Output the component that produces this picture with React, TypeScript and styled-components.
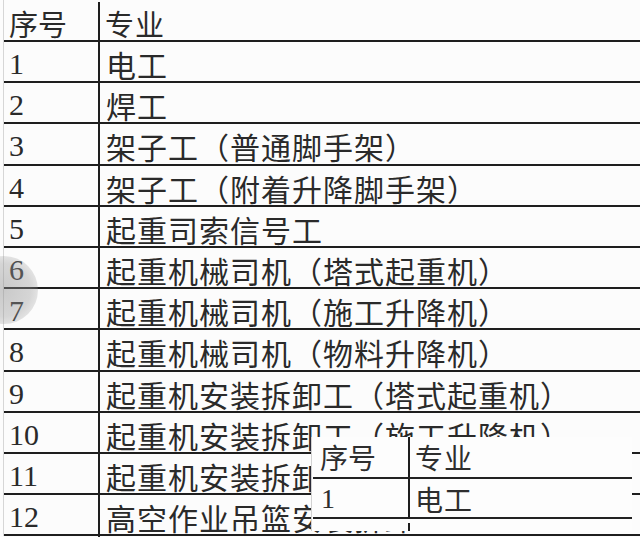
import React from "react";
import styled, { createGlobalStyle } from "styled-components";

const GlobalStyle = createGlobalStyle`
  html, body {
    margin: 0;
    padding: 0;
    background: #fcfcfc;
    overflow: hidden;
  }
`;

const Page = styled.div`
  position: relative;
  width: 640px;
  height: 537px;
  overflow: hidden;
  background: #fcfcfc;
  color: #2a2a2a;
`;

const Sheet = styled.div`
  margin-left: 3px;
  border-left: 1px solid #d6d6d6;
  display: flex;
  flex-direction: column;
`;

const Row = styled.div<{ $h: number; $shift: number }>`
  display: grid;
  grid-template-columns: 96px 1fr;
  flex: none;
  height: ${(p) => p.$h}px;
  padding-top: ${(p) => p.$shift}px;
  border-bottom: 2px solid #1e1e1e;
  box-sizing: content-box;
`;

const NumCell = styled.div<{ $size: number; $pad: number }>`
  display: flex;
  align-items: center;
  padding-left: ${(p) => p.$pad}px;
  border-right: 2px solid #1e1e1e;
  font-family: "Liberation Serif", "Noto Sans CJK SC", serif;
  font-size: ${(p) => p.$size}px;
  white-space: nowrap;
`;

const NameCell = styled.div<{ $size: number; $pad: number }>`
  display: flex;
  align-items: center;
  padding-left: ${(p) => p.$pad}px;
  font-family: "Liberation Serif", "Noto Sans CJK SC", serif;
  font-size: ${(p) => p.$size}px;
  letter-spacing: 1px;
  white-space: nowrap;
`;

const TouchShade = styled.div`
  position: absolute;
  left: -30px;
  top: 256px;
  width: 68px;
  height: 68px;
  border-radius: 50%;
  background: radial-gradient(
    circle,
    rgba(140, 140, 140, 0.45) 0%,
    rgba(150, 150, 150, 0.38) 55%,
    rgba(170, 170, 170, 0) 100%
  );
  pointer-events: none;
`;

const Inset = styled.div`
  position: absolute;
  left: 311px;
  top: 437px;
  width: 321px;
  height: 94px;
  overflow: hidden;
  background: #fdfdfd;
  border-left: 1px solid #d2d2d2;
  box-sizing: border-box;
  display: flex;
  flex-direction: column;
  color: #2e2e2e;
`;

const InsetRow = styled.div<{ $h: number; $shift: number }>`
  display: grid;
  grid-template-columns: 97px 1fr;
  flex: none;
  height: ${(p) => p.$h}px;
  padding-top: ${(p) => p.$shift}px;
  margin-left: 1px;
  border-bottom: 2px solid #222;
  box-sizing: content-box;
`;

const mainRows: [string, string][] = [
  ["1", "电工"],
  ["2", "焊工"],
  ["3", "架子工（普通脚手架）"],
  ["4", "架子工（附着升降脚手架）"],
  ["5", "起重司索信号工"],
  ["6", "起重机械司机（塔式起重机）"],
  ["7", "起重机械司机（施工升降机）"],
  ["8", "起重机械司机（物料升降机）"],
  ["9", "起重机安装拆卸工（塔式起重机）"],
  ["10", "起重机安装拆卸工（施工升降机）"],
  ["11", "起重机安装拆卸工（物料升降机）"],
  ["12", "高空作业吊篮安装拆卸工"],
];

const insetRows: [string, string, number, number][] = [
  ["序号", "专业", 40, 0],
  ["1", "电工", 38, 0],
  ["2", "焊工", 38, 4],
];

export default function App() {
  return (
    <Page>
      <GlobalStyle />
      <Sheet>
        <Row $h={38} $shift={2}>
          <NumCell $size={29} $pad={5}>序号</NumCell>
          <NameCell $size={29} $pad={5}>专业</NameCell>
        </Row>
        {mainRows.map(([n, name]) => (
          <Row key={n} $h={39.2} $shift={0}>
            <NumCell $size={30} $pad={5}>{n}</NumCell>
            <NameCell $size={30} $pad={6}>{name}</NameCell>
          </Row>
        ))}
      </Sheet>
      <TouchShade />
      <Inset>
        {insetRows.map(([n, name, h, shift], i) => (
          <InsetRow key={n} $h={h} $shift={shift}>
            <NumCell $size={28} $pad={i === 0 ? 7 : 8}>{n}</NumCell>
            <NameCell $size={28} $pad={5}>{name}</NameCell>
          </InsetRow>
        ))}
      </Inset>
    </Page>
  );
}
